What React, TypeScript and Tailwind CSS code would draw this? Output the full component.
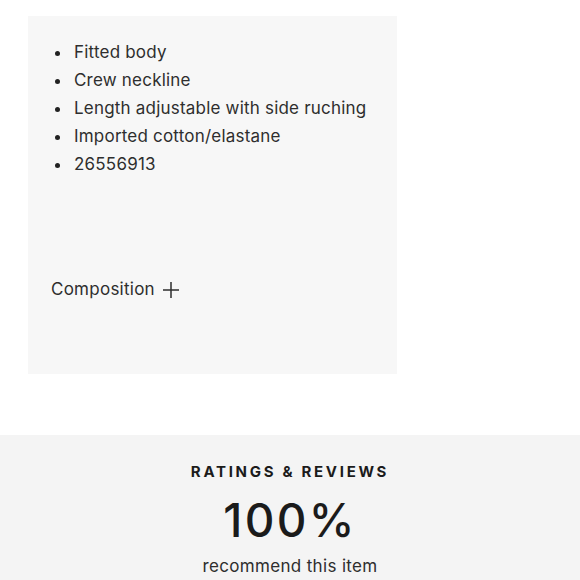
export default function App() {
  const details = [
    'Fitted body',
    'Crew neckline',
    'Length adjustable with side ruching',
    'Imported cotton/elastane',
    '26556913',
  ]

  return (
    <div className="min-h-[580px] bg-white pt-4 font-['Inter',sans-serif] text-[#2e2e2e]">
      {/* product details panel */}
      <div className="ml-7 h-[358px] w-[369px] bg-[#f7f7f7] pl-[23px] pt-[22px]">
        <ul className="flex flex-col">
          {details.map((d) => (
            <li key={d} className="flex h-7 items-center text-[17px] leading-7 tracking-[0.012em]">
              <span className="ml-[4px] mr-[14px] mt-[3px] h-[5px] w-[5px] rounded-full bg-[#222]" />
              {d}
            </li>
          ))}
        </ul>
        <button className="mt-[97px] flex h-7 items-center gap-[8px] text-[17px] leading-7 tracking-[0.015em] text-[#2e2e2e]">
          Composition
          <svg width="16" height="16" viewBox="0 0 16 16" className="mt-[2px]">
            <path d="M8 0v16M0 8h16" stroke="#2e2e2e" strokeWidth="1.5" />
          </svg>
        </button>
      </div>

      {/* ratings summary */}
      <div className="mt-[61px] flex flex-col items-center bg-[#f4f4f4] pt-[27px] pb-4">
        <h2 className="text-[15px] font-bold leading-5 tracking-[0.18em] text-[#1b1b1b]">
          RATINGS &amp; REVIEWS
        </h2>
        <div className="mt-[14px] text-[46px] font-medium leading-[48px] tracking-[0.05em] text-[#1b1b1b]">100%</div>
        <p className="mt-[10px] text-[17px] leading-6 tracking-[0.02em] text-[#2e2e2e]">recommend this item</p>
      </div>
    </div>
  )
}
